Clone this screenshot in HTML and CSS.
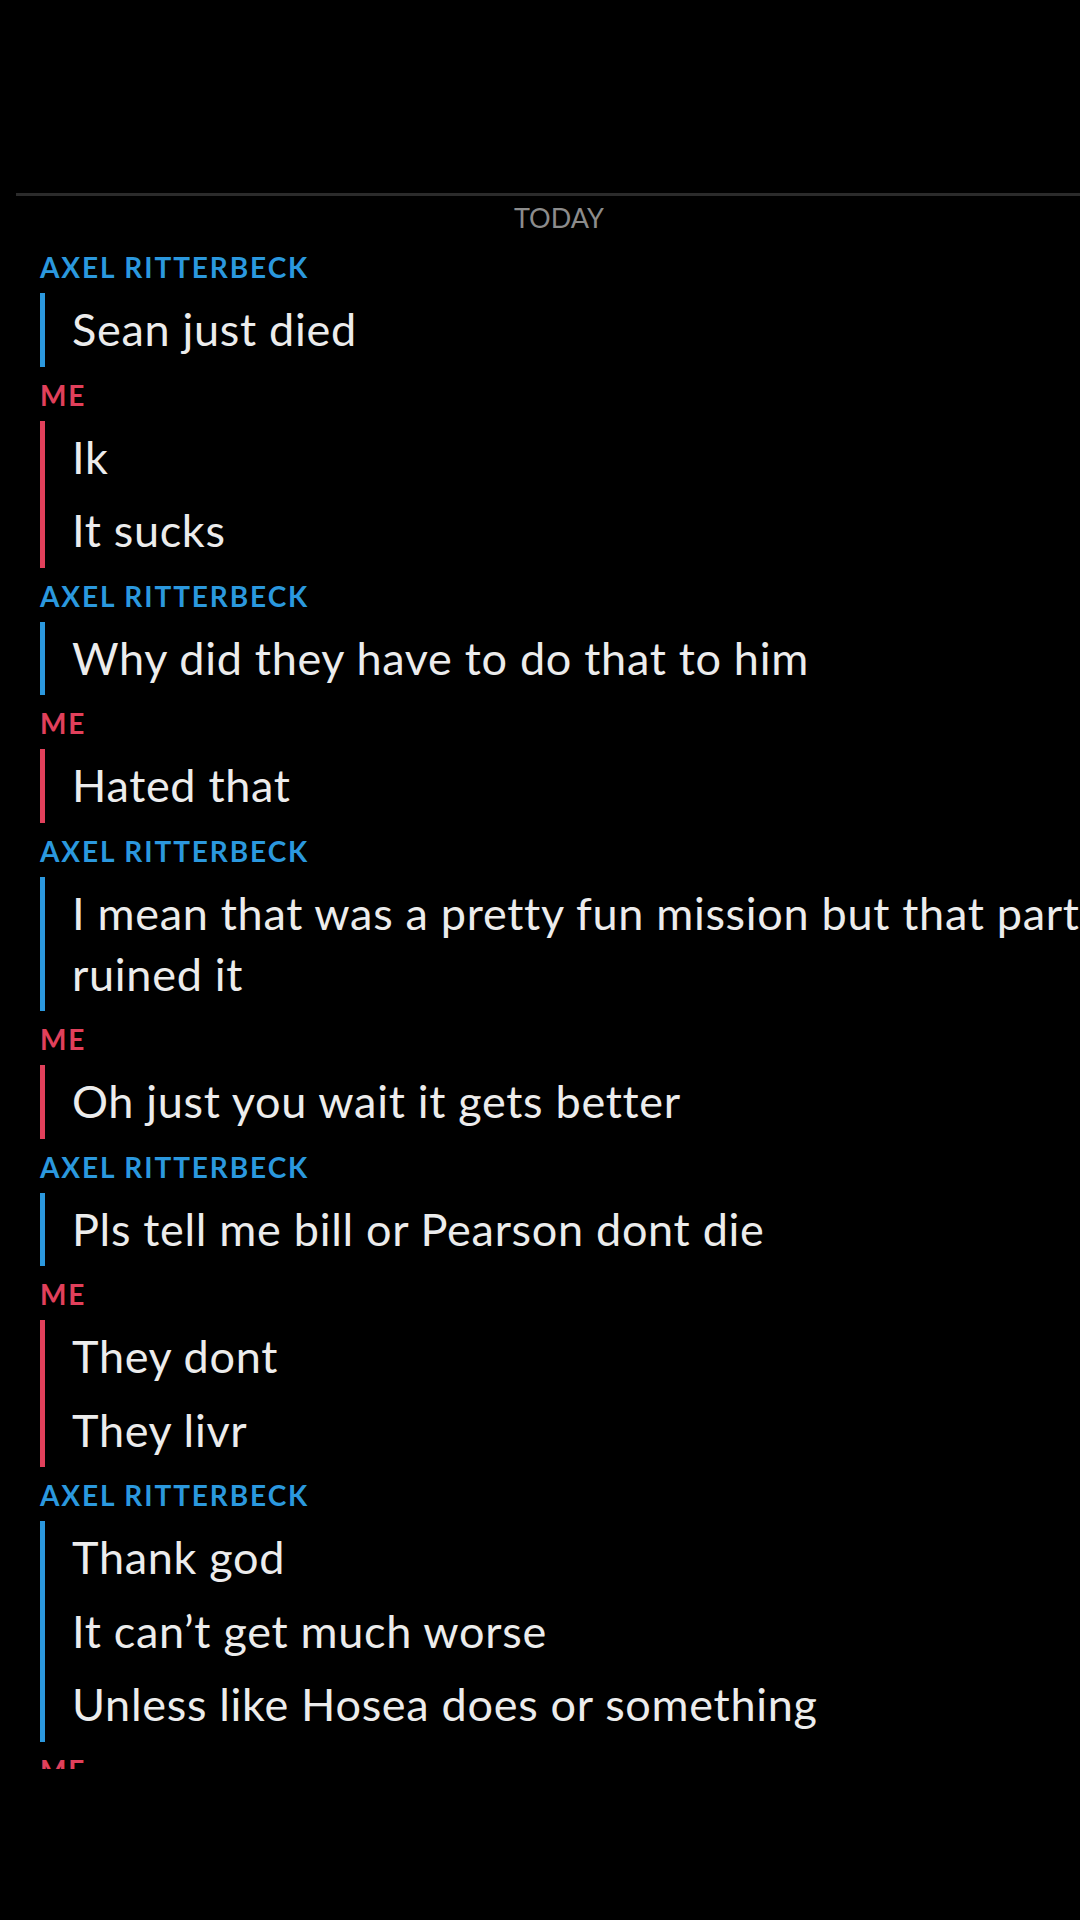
FILE: index.html
```html
<!DOCTYPE html>
<html lang="en">
<head>
<meta charset="utf-8">
<title>Chat</title>
<link rel="stylesheet" href="styles.css">
</head>
<body>
<main class="chat">
  <div class="divider"></div>
  <div class="day">TODAY</div>

  <section class="group them">
    <div class="sender">AXEL RITTERBECK</div>
    <div class="msgs"><p class="msg">Sean just died</p></div>
  </section>

  <section class="group me">
    <div class="sender">ME</div>
    <div class="msgs"><p class="msg">Ik</p><p class="msg">It sucks</p></div>
  </section>

  <section class="group them">
    <div class="sender">AXEL RITTERBECK</div>
    <div class="msgs"><p class="msg">Why did they have to do that to him</p></div>
  </section>

  <section class="group me">
    <div class="sender">ME</div>
    <div class="msgs"><p class="msg">Hated that</p></div>
  </section>

  <section class="group them">
    <div class="sender">AXEL RITTERBECK</div>
    <div class="msgs"><p class="msg">I mean that was a pretty fun mission but that part ruined it</p></div>
  </section>

  <section class="group me">
    <div class="sender">ME</div>
    <div class="msgs"><p class="msg">Oh just you wait it gets better</p></div>
  </section>

  <section class="group them">
    <div class="sender">AXEL RITTERBECK</div>
    <div class="msgs"><p class="msg">Pls tell me bill or Pearson dont die</p></div>
  </section>

  <section class="group me">
    <div class="sender">ME</div>
    <div class="msgs"><p class="msg">They dont</p><p class="msg">They livr</p></div>
  </section>

  <section class="group them">
    <div class="sender">AXEL RITTERBECK</div>
    <div class="msgs"><p class="msg">Thank god</p><p class="msg">It can’t get much worse</p><p class="msg">Unless like Hosea does or something</p></div>
  </section>

  <section class="group me">
    <div class="sender">ME</div>
  </section>
</main>
</body>
</html>
```

FILE: styles.css
```css
html, body {
  margin: 0;
  padding: 0;
  background: #000;
}

body {
  width: 1080px;
  height: 1920px;
  overflow: hidden;
  font-family: Lato, "Open Sans", "Liberation Sans", sans-serif;
  color: #ececec;
}

.chat {
  box-sizing: border-box;
  height: 1769px;
  overflow: hidden;
  padding-top: 193px;
  display: flex;
  flex-direction: column;
}

.divider {
  flex: none;
  height: 3px;
  margin-left: 16px;
  background: #2b2b2b;
}

.day {
  flex: none;
  height: 43px;
  line-height: 43px;
  text-align: center;
  padding-left: 38px;
  font-size: 27px;
  color: #8c8c8c;
}

.group {
  flex: none;
  display: flex;
  flex-direction: column;
}

.sender {
  height: 54px;
  line-height: 56px;
  padding-left: 40px;
  font-size: 28px;
  font-weight: 700;
  letter-spacing: 1.9px;
}

.them .sender { color: #2b98de; }
.me .sender { color: #e1405b; }

.msgs {
  margin-left: 40px;
  padding-left: 27px;
  border-left: 5px solid;
}

.them .msgs { border-color: #2b98de; }
.me .msgs { border-color: #e1405b; }

.msg {
  margin: 0;
  padding: 6.25px 0;
  line-height: 61px;
  font-size: 45px;
  letter-spacing: 0.7px;
  color: #ececec;
}
```
